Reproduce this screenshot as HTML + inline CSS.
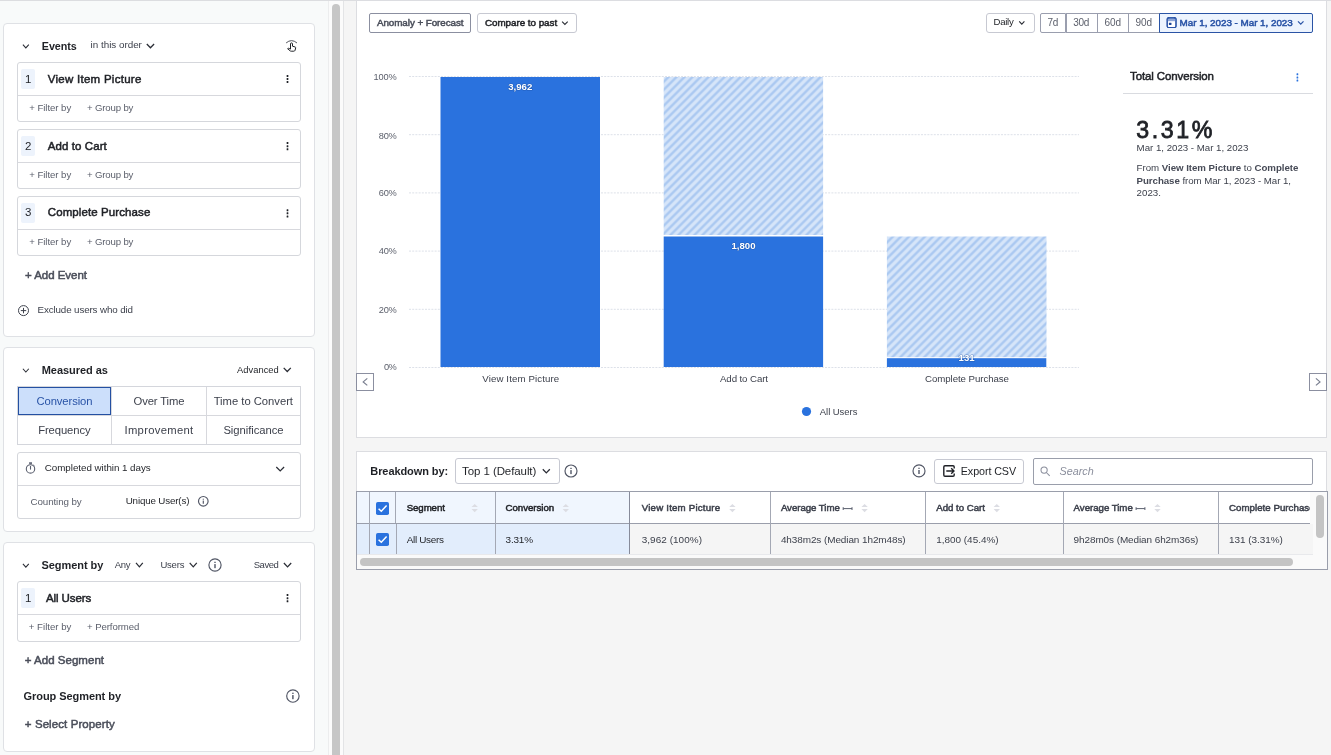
<!DOCTYPE html>
<html lang="en"><head><meta charset="utf-8"><title>Funnel Analysis</title>
<style>
*{box-sizing:border-box;margin:0;padding:0}
html,body{width:1331px;height:755px;overflow:hidden;background:#f5f5f5;font-family:"Liberation Sans",sans-serif}
body{position:relative}
.abs,.t,.box,.ln{position:absolute}
#texts{position:absolute;left:0;top:0;width:1331px;height:755px;will-change:transform}
.t{white-space:nowrap;line-height:1}
.t.wt{-webkit-text-stroke:.5px currentColor}
.t.big{-webkit-text-stroke:.8px #1f2126}
.t.ital{font-style:italic}
.t b{font-weight:700;color:#474b57}
.box{background:#fff;border:1px solid #dcdee3}
.card{border-radius:4px;border-color:#dfe1e5}
.ev{border-radius:3px;border-color:#d5d7dc}
.ln{background:#d7d8dd}
.badge{position:absolute;background:#edf3fc;border-radius:2px}
svg{position:absolute;overflow:visible;will-change:transform}

</style></head><body>
<!-- top hairline -->
<div class="ln" style="left:0;top:0;width:1331px;height:1px;background:#dcdde0"></div>
<!-- left panel -->
<div class="abs" style="left:0;top:1px;width:329px;height:754px;background:#f8fafa;border-right:1px solid #ecedee"></div>
<div class="abs" style="left:329px;top:1px;width:15px;height:754px;background:#fbfbfb;border-right:1px solid #e3e4e6"></div>
<div class="abs" style="left:332px;top:4px;width:8px;height:760px;background:#c6c6c6;border-radius:4px"></div>

<div class="box card" style="left:3px;top:23px;width:312px;height:314px"></div>
<div class="box card" style="left:3px;top:347px;width:312px;height:185px"></div>
<div class="box card" style="left:3px;top:542px;width:312px;height:210px"></div>

<!-- event boxes -->
<div class="box ev" style="left:17px;top:62px;width:284px;height:60px"></div>
<div class="ln" style="left:18px;top:95px;width:282px;height:1px"></div>
<div class="badge" style="left:21px;top:69px;width:14px;height:20px"></div>
<div class="box ev" style="left:17px;top:129px;width:284px;height:60px"></div>
<div class="ln" style="left:18px;top:162px;width:282px;height:1px"></div>
<div class="badge" style="left:21px;top:136px;width:14px;height:20px"></div>
<div class="box ev" style="left:17px;top:196px;width:284px;height:60px"></div>
<div class="ln" style="left:18px;top:229px;width:282px;height:1px"></div>
<div class="badge" style="left:21px;top:203px;width:14px;height:20px"></div>

<!-- measured-as grid -->
<div class="box" style="left:17px;top:386px;width:284px;height:59px;border-color:#d4d6dc"></div>
<div class="ln" style="left:18px;top:415px;width:282px;height:1px"></div>
<div class="ln" style="left:111px;top:387px;width:1px;height:57px"></div>
<div class="ln" style="left:206px;top:387px;width:1px;height:57px"></div>
<div class="abs" style="left:18px;top:387px;width:93px;height:28px;background:#ccdffb;border:1px solid #2450a2"></div>
<!-- completed box -->
<div class="box ev" style="left:17px;top:452px;width:284px;height:67px"></div>
<div class="ln" style="left:18px;top:485px;width:282px;height:1px"></div>
<!-- segment box -->
<div class="box ev" style="left:17px;top:581px;width:284px;height:61px"></div>
<div class="ln" style="left:18px;top:614px;width:282px;height:1px"></div>
<div class="badge" style="left:21px;top:588px;width:14px;height:20px"></div>

<!-- right: chart panel -->
<div class="box" style="left:356px;top:0;width:971px;height:438px;border-color:#dcdde1"></div>
<!-- right: table panel -->
<div class="box" style="left:356px;top:451px;width:971px;height:119px;border-color:#dcdde1"></div>

<!-- header buttons -->
<div class="box" style="left:369px;top:13px;width:102px;height:20px;border-color:#8b8fa0;border-radius:2px"></div>
<div class="box" style="left:477px;top:13px;width:100px;height:20px;border-color:#c7c9d2;border-radius:3px"></div>
<div class="box" style="left:986px;top:13px;width:49px;height:20px;border-color:#c7c9d2;border-radius:3px"></div>
<div class="box" style="left:1040px;top:13px;width:26px;height:20px;border-color:#9a9eae;border-radius:2px 0 0 2px"></div>
<div class="box" style="left:1066px;top:13px;width:32px;height:20px;border-color:#9a9eae"></div>
<div class="box" style="left:1097px;top:13px;width:32px;height:20px;border-color:#9a9eae"></div>
<div class="box" style="left:1128px;top:13px;width:32px;height:20px;border-color:#9a9eae"></div>
<div class="box" style="left:1159px;top:13px;width:154px;height:20px;border-color:#2a54a5;background:#edf4fe;border-radius:0 2px 2px 0"></div>
<!-- total conversion divider -->
<div class="ln" style="left:1123px;top:93px;width:190px;height:1px;background:#d9dbe0"></div>
<!-- nav arrows -->
<div class="box" style="left:356px;top:373px;width:18px;height:18px;border-color:#8b8fa0;border-radius:0"></div>
<div class="box" style="left:1309px;top:373px;width:18px;height:18px;border-color:#8b8fa0;border-radius:0"></div>
<!-- chart -->
<svg width="1331" height="755" viewBox="0 0 1331 755" style="left:0;top:0" shape-rendering="auto">
<defs>
<pattern id="hatch" width="8" height="8" patternUnits="userSpaceOnUse" patternTransform="translate(0.5 0)">
<rect width="8" height="8" fill="#d6e5f9"/>
<g stroke="#abc9f1" stroke-width="2.45" stroke-linecap="butt">
<line x1="-2" y1="3" x2="3" y2="-2"/>
<line x1="-2" y1="11" x2="11" y2="-2"/>
<line x1="6" y1="11" x2="11" y2="6"/>
</g>
</pattern>
</defs>
<g stroke="#dde1e9" stroke-width="1" stroke-dasharray="2 1.2" fill="none">
<line x1="409" y1="76.5" x2="1079" y2="76.5"/>
<line x1="409" y1="134.7" x2="1079" y2="134.7"/>
<line x1="409" y1="192.9" x2="1079" y2="192.9"/>
<line x1="409" y1="251.1" x2="1079" y2="251.1"/>
<line x1="409" y1="309.3" x2="1079" y2="309.3"/>
<line x1="409" y1="367.5" x2="1079" y2="367.5"/>
</g>
<!-- bar 1 -->
<rect x="440.5" y="77" width="159.5" height="290" fill="#2a72de"/>
<!-- bar 2 -->
<rect x="663.7" y="77" width="159.4" height="158" fill="url(#hatch)"/>
<rect x="663.7" y="236.5" width="159.4" height="130.5" fill="#2a72de"/>
<!-- bar 3 -->
<rect x="886.9" y="236.5" width="159.6" height="120.7" fill="url(#hatch)"/>
<rect x="886.9" y="358.2" width="159.4" height="8.8" fill="#2a72de"/>
<circle cx="806.5" cy="411.5" r="4.6" fill="#2a72de"/>
<g font-family="Liberation Sans, sans-serif" font-size="9.6" font-weight="700" fill="#fff" text-anchor="middle" style="paint-order:stroke;stroke:#1c4f9e;stroke-width:1.2px;stroke-opacity:.55;stroke-linejoin:round">
<text x="520.3" y="90.2">3,962</text>
<text x="743.5" y="248.9">1,800</text>
<text x="966.6" y="361">131</text>
</g>
</svg>

<!-- table -->
<div class="abs" style="left:356px;top:491px;width:972px;height:79px;border:1px solid #9a9eab;background:#fafafa"></div>
<div class="abs" style="left:630px;top:492px;width:680px;height:31px;background:#fff"></div>
<!-- header bg -->
<div class="abs" style="left:357px;top:492px;width:273px;height:31px;background:#f0f6fe"></div>
<div class="abs" style="left:357px;top:524px;width:273px;height:30px;background:#e2edfc"></div>
<div class="abs" style="left:630px;top:524px;width:683px;height:30px;background:#f5f5f5"></div>
<div class="abs" style="left:357px;top:554px;width:956px;height:1px;background:#e8e9ec"></div>
<!-- header bottom line -->
<div class="ln" style="left:357px;top:523px;width:953px;height:1px;background:#9a9eab"></div>
<!-- column lines -->
<div class="ln" style="left:369px;top:492px;width:1px;height:62px;background:#a4a8b4"></div>
<div class="ln" style="left:395px;top:492px;width:1px;height:31px;background:#a4a8b4"></div>
<div class="ln" style="left:396px;top:524px;width:1px;height:30px;background:#a4a8b4"></div>
<div class="ln" style="left:495px;top:492px;width:1px;height:62px;background:#a4a8b4"></div>
<div class="ln" style="left:629px;top:492px;width:1px;height:62px;background:#878b9a"></div>
<div class="ln" style="left:770px;top:492px;width:1px;height:62px;background:#a4a8b4"></div>
<div class="ln" style="left:925px;top:492px;width:1px;height:62px;background:#a4a8b4"></div>
<div class="ln" style="left:1063px;top:492px;width:1px;height:62px;background:#a4a8b4"></div>
<div class="ln" style="left:1218px;top:492px;width:1px;height:62px;background:#a4a8b4"></div>
<!-- scrollbars -->
<div class="abs" style="left:360px;top:558px;width:933px;height:8px;background:#c4c4c4;border-radius:4px"></div>
<div class="abs" style="left:1316px;top:495px;width:8px;height:43px;background:#c4c4c4;border-radius:4px"></div>
<!-- clip for Complete Purchase header: white mask -->
<!-- checkboxes -->
<svg width="13" height="13" viewBox="0 0 13 13" style="left:376px;top:502px"><rect width="13" height="13" rx="1.8" fill="#2a72de"/><path d="M2.6 6.7 L5.3 9.3 L10.6 3.6" fill="none" stroke="#fff" stroke-width="1.5"/></svg>
<svg width="13" height="13" viewBox="0 0 13 13" style="left:376px;top:533px"><rect width="13" height="13" rx="1.8" fill="#2a72de"/><path d="M2.6 6.7 L5.3 9.3 L10.6 3.6" fill="none" stroke="#fff" stroke-width="1.5"/></svg>
<!-- toolbar boxes -->
<div class="box" style="left:455px;top:458px;width:105px;height:26px;border-color:#c7c9d2;border-radius:3px"></div>
<div class="box" style="left:934px;top:459px;width:90px;height:25px;border-color:#c7c9d2;border-radius:3px"></div>
<div class="box" style="left:1033px;top:458px;width:280px;height:27px;border-color:#9a9eab;border-radius:2px"></div>
<!-- icons -->
<svg width="1331" height="755" viewBox="0 0 1331 755" style="left:0;top:0">
<path d="M22.90 44.55 L25.85 47.85 L28.80 44.55" stroke="#2a2d35" stroke-width="1.05" fill="none" stroke-linejoin="miter"/>
<path d="M22.90 368.75 L25.85 372.05 L28.80 368.75" stroke="#2a2d35" stroke-width="1.05" fill="none" stroke-linejoin="miter"/>
<path d="M22.90 563.85 L25.85 567.15 L28.80 563.85" stroke="#2a2d35" stroke-width="1.05" fill="none" stroke-linejoin="miter"/>
<path d="M146.80 44.00 L150.45 47.80 L154.10 44.00" stroke="#2a2d35" stroke-width="1.25" fill="none" stroke-linejoin="miter"/>
<path d="M283.70 367.85 L287.25 371.55 L290.80 367.85" stroke="#2a2d35" stroke-width="1.25" fill="none" stroke-linejoin="miter"/>
<path d="M136.00 562.95 L139.40 566.85 L142.80 562.95" stroke="#2a2d35" stroke-width="1.25" fill="none" stroke-linejoin="miter"/>
<path d="M189.70 562.95 L193.25 566.85 L196.80 562.95" stroke="#2a2d35" stroke-width="1.25" fill="none" stroke-linejoin="miter"/>
<path d="M283.90 562.95 L287.55 566.85 L291.20 562.95" stroke="#2a2d35" stroke-width="1.25" fill="none" stroke-linejoin="miter"/>
<path d="M276.30 466.95 L280.20 470.85 L284.10 466.95" stroke="#2a2d35" stroke-width="1.25" fill="none" stroke-linejoin="miter"/>
<path d="M562.10 21.55 L564.90 24.45 L567.70 21.55" stroke="#2a2d35" stroke-width="1.1" fill="none" stroke-linejoin="miter"/>
<path d="M1019.20 21.40 L1021.80 24.20 L1024.40 21.40" stroke="#2a2d35" stroke-width="1.1" fill="none" stroke-linejoin="miter"/>
<path d="M1298.00 21.35 L1300.75 24.25 L1303.50 21.35" stroke="#2953a6" stroke-width="1.2" fill="none" stroke-linejoin="miter"/>
<path d="M542.80 469.25 L546.30 472.95 L549.80 469.25" stroke="#2a2d35" stroke-width="1.25" fill="none" stroke-linejoin="miter"/>
<rect x="286.65" y="74.90" width="1.7" height="2.0" rx="0.5" fill="#1f2126"/>
<rect x="286.65" y="78.00" width="1.7" height="2.0" rx="0.5" fill="#1f2126"/>
<rect x="286.65" y="81.10" width="1.7" height="2.0" rx="0.5" fill="#1f2126"/>
<rect x="286.65" y="142.10" width="1.7" height="2.0" rx="0.5" fill="#1f2126"/>
<rect x="286.65" y="145.20" width="1.7" height="2.0" rx="0.5" fill="#1f2126"/>
<rect x="286.65" y="148.30" width="1.7" height="2.0" rx="0.5" fill="#1f2126"/>
<rect x="286.65" y="209.20" width="1.7" height="2.0" rx="0.5" fill="#1f2126"/>
<rect x="286.65" y="212.30" width="1.7" height="2.0" rx="0.5" fill="#1f2126"/>
<rect x="286.65" y="215.40" width="1.7" height="2.0" rx="0.5" fill="#1f2126"/>
<rect x="286.65" y="594.10" width="1.7" height="2.0" rx="0.5" fill="#1f2126"/>
<rect x="286.65" y="597.20" width="1.7" height="2.0" rx="0.5" fill="#1f2126"/>
<rect x="286.65" y="600.30" width="1.7" height="2.0" rx="0.5" fill="#1f2126"/>
<rect x="1296.55" y="73.30" width="1.7" height="2.0" rx="0.5" fill="#2a72de"/>
<rect x="1296.55" y="76.40" width="1.7" height="2.0" rx="0.5" fill="#2a72de"/>
<rect x="1296.55" y="79.50" width="1.7" height="2.0" rx="0.5" fill="#2a72de"/>
<circle cx="203.3" cy="501.3" r="4.8" stroke="#515665" stroke-width="1.15" fill="none"/>
<rect x="202.72" y="498.74" width="1.16" height="0.96" fill="#515665"/>
<rect x="202.72" y="500.58" width="1.16" height="3.20" fill="#515665"/>
<circle cx="215.0" cy="565.0" r="6.1" stroke="#515665" stroke-width="1.15" fill="none"/>
<rect x="214.29" y="561.75" width="1.42" height="1.22" fill="#515665"/>
<rect x="214.29" y="564.09" width="1.42" height="4.07" fill="#515665"/>
<circle cx="292.9" cy="696.0" r="6.2" stroke="#515665" stroke-width="1.15" fill="none"/>
<rect x="292.18" y="692.69" width="1.44" height="1.24" fill="#515665"/>
<rect x="292.18" y="695.07" width="1.44" height="4.13" fill="#515665"/>
<circle cx="571.0" cy="471.0" r="6.0" stroke="#515665" stroke-width="1.15" fill="none"/>
<rect x="570.30" y="467.80" width="1.40" height="1.20" fill="#515665"/>
<rect x="570.30" y="470.10" width="1.40" height="4.00" fill="#515665"/>
<circle cx="919.0" cy="470.9" r="6.0" stroke="#515665" stroke-width="1.15" fill="none"/>
<rect x="918.30" y="467.70" width="1.40" height="1.20" fill="#515665"/>
<rect x="918.30" y="470.00" width="1.40" height="4.00" fill="#515665"/>
<circle cx="23.5" cy="310.6" r="5.0" stroke="#3d414c" stroke-width="1" fill="none"/><path d="M20.8 310.6 H26.2 M23.5 307.9 V313.3" stroke="#3d414c" stroke-width="1" fill="none"/>
<g stroke="#5a5f6e" fill="none"><circle cx="30.5" cy="468.9" r="4.2" stroke-width="1.1"/><path d="M30.5 466 V469.6" stroke-width="1.1"/><path d="M33.6 465.0 L34.5 465.9" stroke-width="1"/></g><rect x="29.1" y="462.2" width="2.9" height="2.0" fill="#6a6f7e"/>
<g stroke="#1f2126" fill="none" stroke-linejoin="round" stroke-linecap="round"><path d="M286.4 42.7 Q291.5 38.3 296.7 42.7" stroke-width="0.95" stroke="#4a4d55"/><path d="M290.5 48.7 V43.9 a1 1 0 0 1 2 0 V46.2 L295.2 47.0 q.7 .3 .5 1.0 L295.0 50.4 q-.3 .8 -1.2 .8 H291.2 q-.6 0 -1.1 -.4 L287.6 48.7 q.8 -.9 1.9 -.2 Z" stroke-width="1.0"/></g>
<g><rect x="1167.2" y="17.9" width="8.8" height="9.6" rx="1.2" fill="#fff" stroke="#2953a6" stroke-width="1.1"/><rect x="1167.2" y="17.9" width="8.8" height="3.3" fill="#8ea6d6"/><rect x="1167.2" y="17.9" width="8.8" height="9.6" rx="1.2" fill="none" stroke="#2953a6" stroke-width="1.1"/><rect x="1168.0" y="17.0" width="1.3" height="1.5" fill="#2953a6"/><rect x="1173.9" y="17.0" width="1.3" height="1.5" fill="#2953a6"/><rect x="1168.9" y="22.7" width="2.6" height="2.2" rx=".4" fill="#1c4598"/></g>
<g stroke="#1f2126" stroke-width="1.4" fill="none" stroke-linejoin="round"><path d="M954.2 468.4 V467.0 q0 -1.2 -1.2 -1.2 H945.0 q-1.2 0 -1.2 1.2 V475.0 q0 1.2 1.2 1.2 H953.0 q1.2 0 1.2 -1.2 V473.6"/><path d="M946.3 471 H953.6 M951.2 468.3 L954.0 471 L951.2 473.7"/></g>
<g stroke="#8a8e9c" stroke-width="1.05" fill="none"><circle cx="1044.1" cy="470.1" r="3.1"/><path d="M1046.4 472.5 L1049.7 475.8"/></g>
<path d="M471.5 507.1 L474.7 504.0 L477.9 507.1 Z M471.5 509.1 L474.7 512.2 L477.9 509.1 Z" fill="#dcdde3"/>
<path d="M562.5999999999999 507.1 L565.8 504.0 L569.0 507.1 Z M562.5999999999999 509.1 L565.8 512.2 L569.0 509.1 Z" fill="#dcdde3"/>
<path d="M729.1999999999999 507.1 L732.4 504.0 L735.6 507.1 Z M729.1999999999999 509.1 L732.4 512.2 L735.6 509.1 Z" fill="#dcdde3"/>
<path d="M861.4 507.1 L864.6 504.0 L867.8000000000001 507.1 Z M861.4 509.1 L864.6 512.2 L867.8000000000001 509.1 Z" fill="#dcdde3"/>
<path d="M993.5999999999999 507.1 L996.8 504.0 L1000.0 507.1 Z M993.5999999999999 509.1 L996.8 512.2 L1000.0 509.1 Z" fill="#dcdde3"/>
<path d="M1154.3 507.1 L1157.5 504.0 L1160.7 507.1 Z M1154.3 509.1 L1157.5 512.2 L1160.7 509.1 Z" fill="#dcdde3"/>
<path d="M843.2 507.2 V510.0 M852.0 507.2 V510.0 M843.2 508.6 H852.0" stroke="#5a5f6e" stroke-width="1" fill="none"/>
<path d="M1136.1 507.2 V510.0 M1144.8999999999999 507.2 V510.0 M1136.1 508.6 H1144.8999999999999" stroke="#5a5f6e" stroke-width="1" fill="none"/>
<path d="M367.3 378.4 L363.2 381.9 L367.3 385.4" stroke="#7a7f90" stroke-width="1.2" fill="none"/>
<path d="M1315.9 378.4 L1320.0 381.9 L1315.9 385.4" stroke="#7a7f90" stroke-width="1.2" fill="none"/>
</svg>

<div id="texts">
<span class="t" style="left:41.80px;top:41.00px;font-size:10.75px;font-weight:700;color:#1f2126;letter-spacing:-0.073px">Events</span>
<span class="t" style="left:90.60px;top:40.01px;font-size:9.85px;font-weight:400;color:#3d414c;letter-spacing:-0.011px">in this order</span>
<span class="t" style="left:24.90px;top:74.01px;font-size:11.50px;font-weight:400;color:#1f2126;letter-spacing:0.000px">1</span>
<span class="t wt" style="left:47.80px;top:74.01px;font-size:11.50px;font-weight:400;color:#1f2126;letter-spacing:0.265px">View Item Picture</span>
<span class="t" style="left:29.20px;top:103.00px;font-size:9.60px;font-weight:400;color:#5b5f6b;letter-spacing:-0.039px">+ Filter by</span>
<span class="t" style="left:87.00px;top:103.00px;font-size:9.60px;font-weight:400;color:#5b5f6b;letter-spacing:-0.148px">+ Group by</span>
<span class="t" style="left:24.90px;top:141.01px;font-size:11.50px;font-weight:400;color:#1f2126;letter-spacing:0.000px">2</span>
<span class="t wt" style="left:47.80px;top:141.01px;font-size:11.50px;font-weight:400;color:#1f2126;letter-spacing:0.083px">Add to Cart</span>
<span class="t" style="left:29.20px;top:170.00px;font-size:9.60px;font-weight:400;color:#5b5f6b;letter-spacing:-0.039px">+ Filter by</span>
<span class="t" style="left:87.00px;top:170.00px;font-size:9.60px;font-weight:400;color:#5b5f6b;letter-spacing:-0.148px">+ Group by</span>
<span class="t" style="left:24.90px;top:207.01px;font-size:11.50px;font-weight:400;color:#1f2126;letter-spacing:0.000px">3</span>
<span class="t wt" style="left:47.80px;top:207.01px;font-size:11.50px;font-weight:400;color:#1f2126;letter-spacing:0.094px">Complete Purchase</span>
<span class="t" style="left:29.20px;top:237.00px;font-size:9.60px;font-weight:400;color:#5b5f6b;letter-spacing:-0.039px">+ Filter by</span>
<span class="t" style="left:87.00px;top:237.00px;font-size:9.60px;font-weight:400;color:#5b5f6b;letter-spacing:-0.148px">+ Group by</span>
<span class="t wt" style="left:25.00px;top:270.01px;font-size:11.50px;font-weight:400;color:#4a4e5a;letter-spacing:-0.034px">+ Add Event</span>
<span class="t" style="left:37.50px;top:305.00px;font-size:9.80px;font-weight:400;color:#3d414c;letter-spacing:-0.127px">Exclude users who did</span>
<span class="t" style="left:41.70px;top:365.01px;font-size:11.00px;font-weight:700;color:#1f2126;letter-spacing:-0.036px">Measured as</span>
<span class="t" style="left:237.00px;top:366.00px;font-size:9.35px;font-weight:400;color:#1f2126;letter-spacing:0.034px">Advanced</span>
<span class="t" style="left:36.50px;top:396.01px;font-size:11.25px;font-weight:400;color:#2953a6;letter-spacing:-0.101px">Conversion</span>
<span class="t" style="left:133.50px;top:396.01px;font-size:11.25px;font-weight:400;color:#3d414c;letter-spacing:-0.111px">Over Time</span>
<span class="t" style="left:213.70px;top:396.01px;font-size:11.25px;font-weight:400;color:#3d414c;letter-spacing:-0.022px">Time to Convert</span>
<span class="t" style="left:38.20px;top:425.01px;font-size:11.25px;font-weight:400;color:#3d414c;letter-spacing:-0.095px">Frequency</span>
<span class="t" style="left:124.50px;top:425.01px;font-size:11.25px;font-weight:400;color:#3d414c;letter-spacing:0.304px">Improvement</span>
<span class="t" style="left:223.40px;top:425.01px;font-size:11.25px;font-weight:400;color:#3d414c;letter-spacing:-0.052px">Significance</span>
<span class="t" style="left:44.80px;top:463.01px;font-size:9.80px;font-weight:400;color:#1f2126;letter-spacing:-0.038px">Completed within 1 days</span>
<span class="t" style="left:30.50px;top:497.01px;font-size:9.80px;font-weight:400;color:#5b5f6b;letter-spacing:-0.110px">Counting by</span>
<span class="t" style="left:125.70px;top:496.00px;font-size:9.80px;font-weight:400;color:#1f2126;letter-spacing:-0.161px">Unique User(s)</span>
<span class="t" style="left:41.40px;top:560.00px;font-size:11.00px;font-weight:700;color:#1f2126;letter-spacing:-0.040px">Segment by</span>
<span class="t" style="left:114.70px;top:560.01px;font-size:9.50px;font-weight:400;color:#3d414c;letter-spacing:-0.238px">Any</span>
<span class="t" style="left:160.40px;top:560.01px;font-size:9.50px;font-weight:400;color:#3d414c;letter-spacing:-0.203px">Users</span>
<span class="t" style="left:253.70px;top:560.01px;font-size:9.50px;font-weight:400;color:#3d414c;letter-spacing:-0.434px">Saved</span>
<span class="t" style="left:24.90px;top:593.01px;font-size:11.50px;font-weight:400;color:#1f2126;letter-spacing:0.000px">1</span>
<span class="t wt" style="left:46.00px;top:593.01px;font-size:11.50px;font-weight:400;color:#1f2126;letter-spacing:-0.089px">All Users</span>
<span class="t" style="left:28.80px;top:622.00px;font-size:9.60px;font-weight:400;color:#5b5f6b;letter-spacing:0.021px">+ Filter by</span>
<span class="t" style="left:87.00px;top:622.00px;font-size:9.60px;font-weight:400;color:#5b5f6b;letter-spacing:-0.066px">+ Performed</span>
<span class="t wt" style="left:24.80px;top:655.00px;font-size:11.50px;font-weight:400;color:#4a4e5a;letter-spacing:0.019px">+ Add Segment</span>
<span class="t" style="left:23.50px;top:691.01px;font-size:11.00px;font-weight:700;color:#1f2126;letter-spacing:-0.060px">Group Segment by</span>
<span class="t wt" style="left:24.80px;top:719.00px;font-size:11.50px;font-weight:400;color:#4a4e5a;letter-spacing:0.086px">+ Select Property</span>
<span class="t wt" style="left:376.90px;top:18.00px;font-size:9.85px;font-weight:400;color:#4a4e5a;letter-spacing:-0.065px">Anomaly + Forecast</span>
<span class="t wt" style="left:484.90px;top:18.00px;font-size:9.85px;font-weight:400;color:#1f2126;letter-spacing:-0.034px">Compare to past</span>
<span class="t" style="left:993.50px;top:17.00px;font-size:9.60px;font-weight:400;color:#1f2126;letter-spacing:-0.257px">Daily</span>
<span class="t" style="left:1047.60px;top:18.01px;font-size:10.00px;font-weight:400;color:#5b5f6b;letter-spacing:-0.325px">7d</span>
<span class="t" style="left:1073.20px;top:18.01px;font-size:10.00px;font-weight:400;color:#5b5f6b;letter-spacing:-0.244px">30d</span>
<span class="t" style="left:1104.40px;top:18.01px;font-size:10.00px;font-weight:400;color:#5b5f6b;letter-spacing:-0.044px">60d</span>
<span class="t" style="left:1135.50px;top:18.01px;font-size:10.00px;font-weight:400;color:#5b5f6b;letter-spacing:-0.094px">90d</span>
<span class="t wt" style="left:1179.60px;top:18.01px;font-size:9.85px;font-weight:400;color:#2953a6;letter-spacing:-0.026px">Mar 1, 2023 - Mar 1, 2023</span>
<span class="t wt" style="left:1130.00px;top:71.01px;font-size:11.50px;font-weight:400;color:#1f2126;letter-spacing:-0.110px">Total Conversion</span>
<span class="t big" style="left:1136.20px;top:119.01px;font-size:23.20px;font-weight:400;color:#1f2126;letter-spacing:2.600px">3.31%</span>
<span class="t" style="left:1136.60px;top:143.01px;font-size:9.70px;font-weight:400;color:#3d414c;letter-spacing:-0.013px">Mar 1, 2023 - Mar 1, 2023</span>
<span class="t" style="left:1136.60px;top:163.01px;font-size:9.70px;font-weight:400;color:#3d414c;letter-spacing:-0.035px">From <b>View Item Picture</b> to <b>Complete</b></span>
<span class="t" style="left:1136.60px;top:176.00px;font-size:9.70px;font-weight:400;color:#3d414c;letter-spacing:-0.053px"><b>Purchase</b> from Mar 1, 2023 - Mar 1,</span>
<span class="t" style="left:1136.60px;top:188.00px;font-size:9.70px;font-weight:400;color:#3d414c;letter-spacing:0.038px">2023.</span>
<span class="t" style="left:373.50px;top:73.00px;font-size:9.25px;font-weight:400;color:#5b5f6b;letter-spacing:-0.124px">100%</span>
<span class="t" style="left:378.80px;top:132.00px;font-size:9.25px;font-weight:400;color:#5b5f6b;letter-spacing:-0.258px">80%</span>
<span class="t" style="left:378.80px;top:189.00px;font-size:9.25px;font-weight:400;color:#5b5f6b;letter-spacing:-0.258px">60%</span>
<span class="t" style="left:378.80px;top:247.00px;font-size:9.25px;font-weight:400;color:#5b5f6b;letter-spacing:-0.258px">40%</span>
<span class="t" style="left:378.80px;top:306.00px;font-size:9.25px;font-weight:400;color:#5b5f6b;letter-spacing:-0.258px">20%</span>
<span class="t" style="left:383.90px;top:363.00px;font-size:9.25px;font-weight:400;color:#5b5f6b;letter-spacing:-0.475px">0%</span>
<span class="t" style="left:482.30px;top:374.01px;font-size:9.70px;font-weight:400;color:#3d414c;letter-spacing:0.106px">View Item Picture</span>
<span class="t" style="left:720.00px;top:374.01px;font-size:9.70px;font-weight:400;color:#3d414c;letter-spacing:-0.102px">Add to Cart</span>
<span class="t" style="left:925.00px;top:374.01px;font-size:9.70px;font-weight:400;color:#3d414c;letter-spacing:-0.067px">Complete Purchase</span>
<span class="t" style="left:819.80px;top:407.01px;font-size:9.45px;font-weight:400;color:#3d414c;letter-spacing:-0.021px">All Users</span>
<span class="t" style="left:370.30px;top:466.01px;font-size:11.00px;font-weight:700;color:#1f2126;letter-spacing:-0.080px">Breakdown by:</span>
<span class="t" style="left:462.10px;top:466.01px;font-size:11.50px;font-weight:400;color:#1f2126;letter-spacing:-0.088px">Top 1 (Default)</span>
<span class="t" style="left:960.80px;top:466.01px;font-size:10.75px;font-weight:400;color:#1f2126;letter-spacing:-0.097px">Export CSV</span>
<span class="t ital" style="left:1059.50px;top:466.01px;font-size:10.75px;font-weight:400;color:#8a8e9c;letter-spacing:0.028px">Search</span>
<span class="t wt" style="left:406.70px;top:503.00px;font-size:9.70px;font-weight:400;color:#1f2126;letter-spacing:-0.097px">Segment</span>
<span class="t wt" style="left:505.50px;top:503.00px;font-size:9.70px;font-weight:400;color:#1f2126;letter-spacing:-0.035px">Conversion</span>
<span class="t wt" style="left:641.70px;top:503.00px;font-size:9.70px;font-weight:400;color:#3d414c;letter-spacing:0.206px">View Item Picture</span>
<span class="t wt" style="left:780.90px;top:503.00px;font-size:9.70px;font-weight:400;color:#3d414c;letter-spacing:-0.063px">Average Time</span>
<span class="t wt" style="left:936.20px;top:503.00px;font-size:9.70px;font-weight:400;color:#3d414c;letter-spacing:-0.022px">Add to Cart</span>
<span class="t wt" style="left:1073.60px;top:503.00px;font-size:9.70px;font-weight:400;color:#3d414c;letter-spacing:-0.036px">Average Time</span>
<span class="t wt" style="left:1229.00px;top:503.00px;font-size:9.70px;font-weight:400;color:#3d414c;letter-spacing:0.033px;width:80.80px;overflow:hidden;height:12.6px">Complete Purchase</span>
<span class="t" style="left:406.70px;top:535.01px;font-size:9.95px;font-weight:400;color:#1f2126;letter-spacing:-0.321px">All Users</span>
<span class="t" style="left:505.50px;top:535.01px;font-size:9.95px;font-weight:400;color:#1f2126;letter-spacing:-0.147px">3.31%</span>
<span class="t" style="left:641.70px;top:535.01px;font-size:9.95px;font-weight:400;color:#3d414c;letter-spacing:0.057px">3,962 (100%)</span>
<span class="t" style="left:780.90px;top:535.01px;font-size:9.95px;font-weight:400;color:#3d414c;letter-spacing:-0.074px">4h38m2s (Median 1h2m48s)</span>
<span class="t" style="left:936.20px;top:535.01px;font-size:9.95px;font-weight:400;color:#3d414c;letter-spacing:-0.003px">1,800 (45.4%)</span>
<span class="t" style="left:1073.60px;top:535.01px;font-size:9.95px;font-weight:400;color:#3d414c;letter-spacing:-0.074px">9h28m0s (Median 6h2m36s)</span>
<span class="t" style="left:1229.00px;top:535.01px;font-size:9.95px;font-weight:400;color:#3d414c;letter-spacing:-0.034px">131 (3.31%)</span>
</div>
</body></html>
